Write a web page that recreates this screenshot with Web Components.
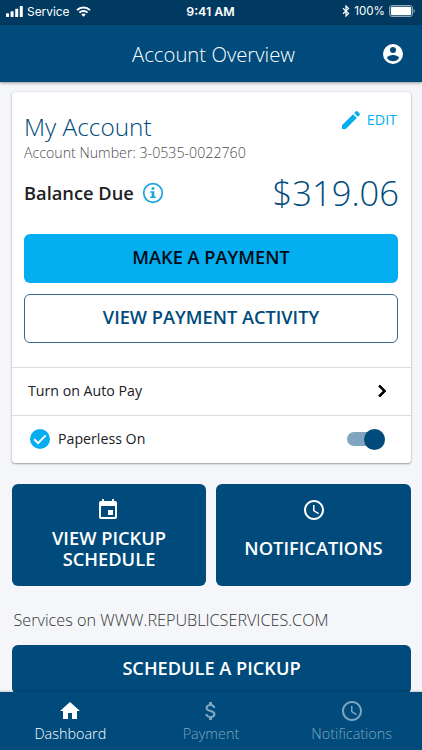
<!DOCTYPE html>
<html lang="en">
<head>
<meta charset="utf-8">
<meta name="viewport" content="width=device-width, initial-scale=1">
<title>Account Overview</title>
<style>
  html, body {
    margin: 0;
    height: 100%;
    overflow: hidden;
  }
  body {
    --navy: #004b7c;
    --sky: #05adf1;
    --ink: #202124;
    background: #f5f6f9;
    color: var(--ink);
    font-family: "Open Sans", "Noto Sans", sans-serif;
  }
</style>
</head>
<body>
<account-app></account-app>

<script>
const icons = {
  account: '<path fill-rule="evenodd" d="M12 2a10 10 0 1 0 0 20 10 10 0 0 0 0-20zm0 3a3 3 0 1 1 0 6 3 3 0 0 1 0-6zm0 14.2a7.2 7.2 0 0 1-6-3.22c.03-1.99 4-3.08 6-3.08s5.97 1.09 6 3.08a7.2 7.2 0 0 1-6 3.22z"/>',
  pencil: '<path d="M3 17.25V21h3.75L17.81 9.94l-3.75-3.75zM20.71 7.04a1 1 0 0 0 0-1.41l-2.34-2.34a1 1 0 0 0-1.41 0l-1.83 1.83 3.75 3.75z"/>',
  info: '<circle cx="12" cy="12" r="9.3" fill="none" stroke="currentColor" stroke-width="1.7"/><path d="M10.6 6.3h2.7v2.4h-2.7zM9.3 10.2h4v5.2h1.5V17H9.2v-1.6h1.5v-3.6H9.3z"/>',
  chevron: '<path d="M8.6 16.6l4.6-4.6-4.6-4.6L10 6l6 6-6 6z" stroke="currentColor" stroke-width=".8"/>',
  check: '<circle cx="12" cy="12" r="10"/><path d="M6.2 12.3l3.9 3.9 7.6-7.8" fill="none" stroke="#fff" stroke-width="2"/>',
  event: '<path d="M17 12h-5v5h5zM16 1v2H8V1H6v2H5a2 2 0 0 0-1.99 2L3 19a2 2 0 0 0 2 2h14a2 2 0 0 0 2-2V5a2 2 0 0 0-2-2h-1V1zm3 18H5V8h14z"/>',
  clock: '<path d="M11.99 2C6.47 2 2 6.48 2 12s4.47 10 9.99 10C17.52 22 22 17.52 22 12S17.52 2 11.99 2zM12 20a8 8 0 1 1 0-16 8 8 0 0 1 0 16zm.5-13H11v6l5.25 3.15.75-1.23-4.5-2.67z"/>',
  home: '<path d="M10 20v-6h4v6h5v-8h3L12 3 2 12h3v8z"/>',
  dollar: '<path d="M11.8 10.9c-2.27-.59-3-1.2-3-2.15 0-1.09 1.01-1.85 2.7-1.85 1.78 0 2.44.85 2.5 2.1h2.21c-.07-1.72-1.12-3.3-3.21-3.81V3h-3v2.16c-1.94.42-3.5 1.68-3.5 3.61 0 2.31 1.91 3.46 4.7 4.13 2.5.6 3 1.48 3 2.41 0 .69-.49 1.79-2.7 1.79-2.06 0-2.87-.92-2.98-2.1h-2.2c.12 2.19 1.76 3.42 3.68 3.83V21h3v-2.15c1.95-.37 3.5-1.5 3.5-3.55 0-2.84-2.43-3.81-4.7-4.4z"/>',
};

class UiIcon extends HTMLElement {
  connectedCallback() {
    const root = this.attachShadow({ mode: "open" });
    root.innerHTML = `
      <style>
        :host { display: block; flex: none; width: 24px; height: 24px; }
        svg { display: block; width: 100%; height: 100%; fill: currentColor; }
      </style>
      <svg viewBox="0 0 24 24" aria-hidden="true">${icons[this.getAttribute("name")]}</svg>`;
  }
}

// Shadow root filled from the class's static markup
class UiElement extends HTMLElement {
  constructor() {
    super();
    this.attachShadow({ mode: "open" }).innerHTML = this.constructor.markup;
  }
}

class StatusBar extends UiElement {
  static markup = `
    <style>
      :host {
        display: grid;
        grid-template-columns: 1fr auto 1fr;
        align-items: center;
        box-sizing: border-box;
        height: 25px;
        padding: 0 7px 0 6px;
        background: #003a61;
        color: #fff;
        font: 400 12px/15px Inter, sans-serif;
      }
      div { display: flex; align-items: center; padding-bottom: 3px; }
      .time { font-weight: 600; font-size: 12.4px; padding-bottom: 2px; }
      .carrier { font-size: 11.9px; margin: 0 6px 0 4px; }
      .right { justify-content: flex-end; }
      .right span { font-size: 11.6px; margin: 0 4px; }
      svg { display: block; }
    </style>
    <div>
      <svg width="17" height="11" fill="#fff">
        <rect x="0" y="7.2" width="3" height="3.8" rx=".6"/>
        <rect x="4.6" y="5.2" width="3" height="5.8" rx=".6"/>
        <rect x="9.2" y="2.8" width="3" height="8.2" rx=".6"/>
        <rect x="13.8" y="0" width="3" height="11" rx=".6"/>
      </svg>
      <span class="carrier">Service</span>
      <svg width="15" height="11" viewBox="0 0 15 11" fill="none" stroke="#fff" stroke-width="2">
        <path d="M1 4.1a9.2 9.2 0 0 1 13 0M3.4 6.6a5.8 5.8 0 0 1 8.2 0"/>
        <path d="M7.5 10.8L5.3 8.5a3.1 3.1 0 0 1 4.4 0z" fill="#fff" stroke="none"/>
      </svg>
    </div>
    <div class="time">9:41 AM</div>
    <div class="right">
      <svg width="8" height="12" viewBox="0 0 8 12" fill="none" stroke="#fff" stroke-width="1.2">
        <path d="M1 3.3l5.6 5.2L4 11V1l2.6 2.5L1 8.7"/>
      </svg>
      <span>100%</span>
      <svg width="26" height="12" viewBox="0 0 26 12">
        <rect x=".5" y=".5" width="23" height="11" rx="2.5" fill="none" stroke="#91a9bc"/>
        <rect x="1.8" y="1.8" width="20.4" height="8.4" rx="1.2" fill="#fff"/>
        <path d="M24.6 4v4q1.3-.6 1.3-2t-1.3-2z" fill="#91a9bc"/>
      </svg>
    </div>`;
}

class AppHeader extends UiElement {
  static markup = `
    <style>
      :host {
        display: grid;
        grid-template-columns: 1fr auto 1fr;
        align-items: center;
        box-sizing: border-box;
        height: 57px;
        padding: 0 17px;
        background: var(--navy);
        color: #fff;
        box-shadow: 0 1px 3px rgba(0, 0, 0, .4);
      }
      h1 {
        grid-column: 2;
        margin: 0 0 0 5px;
        font-size: 20.3px;
        font-weight: 300;
        line-height: 28px;
      }
      ui-icon { justify-self: end; }
    </style>
    <h1><slot></slot></h1>
    <ui-icon name="account"></ui-icon>`;
}

class UiButton extends UiElement {
  static markup = `
    <style>
      :host {
        display: flex;
        align-items: center;
        justify-content: center;
        box-sizing: border-box;
        height: 49px;
        padding-bottom: 3px;
        border-radius: 6px;
        background: var(--navy);
        color: #fff;
        font-size: 18.2px;
        font-weight: 550;
        line-height: 24px;
      }
      :host([kind="primary"]) { background: var(--sky); color: #020c14; }
      :host([kind="outline"]) {
        background: #fff;
        border: 1px solid #37698f;
        color: var(--navy);
      }
    </style>
    <slot></slot>`;
}

class ActionTile extends UiElement {
  static markup = `
    <style>
      :host {
        display: flex;
        flex-direction: column;
        align-items: center;
        box-sizing: border-box;
        height: 102px;
        padding: 14px 0 11px;
        border-radius: 6px;
        background: var(--navy);
        color: #fff;
        font-size: 18.3px;
        font-weight: 550;
        line-height: 20.5px;
        text-align: center;
      }
      .label { flex: 1; display: flex; align-items: center; }
    </style>
    <slot name="icon"></slot>
    <div class="label"><span><slot></slot></span></div>`;
}

class SettingRow extends UiElement {
  static markup = `
    <style>
      :host {
        display: flex;
        align-items: center;
        box-sizing: border-box;
        height: 48px;
        padding: 0 16px 1px;
        border-top: 1px solid #dcdde0;
        font-size: 14.2px;
        line-height: 20px;
      }
      .label { flex: 1; }
    </style>
    <slot name="start"></slot>
    <div class="label"><slot></slot></div>
    <slot name="end"></slot>`;
}

class UiSwitch extends UiElement {
  static markup = `
    <style>
      :host {
        display: flex;
        justify-content: flex-end;
        align-items: center;
        width: 38px;
        height: 14px;
        border-radius: 7px;
        background: #80a5be;
      }
      i { width: 21px; height: 21px; border-radius: 50%; background: var(--navy); flex: none; }
    </style>
    <i></i>`;
}

class AccountCard extends UiElement {
  static markup = `
    <style>
      :host {
        display: block;
        height: 371px;
        border-radius: 3px;
        background: #fff;
        box-shadow: 0 1px 2px rgba(0, 0, 0, .35), 0 0 2px rgba(0, 0, 0, .15);
      }
      .summary {
        display: flex;
        flex-direction: column;
        box-sizing: border-box;
        height: 275px;
        padding: 16px 13px 0 12px;
      }
      .top, .balance, .edit, .due { display: flex; align-items: center; }
      .top, .balance { justify-content: space-between; }
      .top { height: 36px; }
      h2 { margin: 2px 0 0; color: var(--navy); font-size: 24.4px; font-weight: 300; line-height: 34px; }
      .edit { gap: 4px; color: var(--sky); font-size: 14.3px; line-height: 20px; margin: -13px 1px 0 0; }
      .edit span { padding-top: 1px; }
      .number { color: #4c4d50; font-size: 14.2px; font-weight: 300; line-height: 18px; }
      .balance { height: 61px; margin-bottom: 11px; }
      .due { gap: 7px; font-size: 18.3px; font-weight: 580; }
      .due ui-icon { color: #18a4de; }
      .amount { margin-right: -1px; color: var(--navy); font-size: 34.5px; font-weight: 300; line-height: 44px; }
      ui-button + ui-button { margin-top: 11px; }
      [slot="start"] { margin-right: 6px; color: var(--sky); }
      ui-icon[slot="end"] { margin-right: 1px; color: #000; }
      ui-switch { margin-right: 10px; }
    </style>
    <div class="summary">
      <div class="top">
        <h2>My Account</h2>
        <div class="edit"><ui-icon name="pencil"></ui-icon><span>EDIT</span></div>
      </div>
      <div class="number">Account Number: 3-0535-0022760</div>
      <div class="balance">
        <div class="due">Balance Due <ui-icon name="info"></ui-icon></div>
        <div class="amount">$319.06</div>
      </div>
      <ui-button kind="primary">MAKE A PAYMENT</ui-button>
      <ui-button kind="outline">VIEW PAYMENT ACTIVITY</ui-button>
    </div>
    <setting-row>Turn on Auto Pay<ui-icon slot="end" name="chevron"></ui-icon></setting-row>
    <setting-row>
      <ui-icon slot="start" name="check"></ui-icon>
      Paperless On
      <ui-switch slot="end"></ui-switch>
    </setting-row>`;
}

class TabItem extends UiElement {
  static markup = `
    <style>
      :host {
        display: flex;
        flex-direction: column;
        align-items: center;
        padding-top: 7px;
        color: #7fa5be;
        font-size: 14.4px;
        font-weight: 300;
        line-height: 22px;
      }
      :host([active]) { color: #fff; }
    </style>
    <slot name="icon"></slot>
    <slot></slot>`;
}

class TabBar extends UiElement {
  static markup = `
    <style>
      :host {
        display: grid;
        grid-template-columns: repeat(3, 1fr);
        height: 58px;
        background: var(--navy);
        box-shadow: 0 -1px 2px rgba(0, 0, 0, .18);
      }
    </style>
    <slot></slot>`;
}

class AccountApp extends UiElement {
  static markup = `
    <style>
      :host { display: flex; flex-direction: column; height: 100vh; }
      status-bar, app-header, tab-bar { flex: none; }
      app-header, tab-bar { z-index: 1; }
      main { flex: 1; min-height: 0; overflow: hidden; padding: 10px 11px 0 12px; }
      .tiles { display: grid; grid-template-columns: 194px 1fr; gap: 10px; margin-top: 21px; }
      [name="event"] { margin-right: 3px; }
      p { margin: 22px 0 12px 1.5px; color: #333; font-size: 16.2px; font-weight: 300; line-height: 25px; }
    </style>
    <status-bar></status-bar>
    <app-header>Account Overview</app-header>
    <main>
      <account-card></account-card>
      <div class="tiles">
        <action-tile><ui-icon slot="icon" name="event"></ui-icon>VIEW PICKUP<br>SCHEDULE</action-tile>
        <action-tile><ui-icon slot="icon" name="clock"></ui-icon>NOTIFICATIONS</action-tile>
      </div>
      <p>Services on WWW.REPUBLICSERVICES.COM</p>
      <ui-button>SCHEDULE A PICKUP</ui-button>
    </main>
    <tab-bar>
      <tab-item active><ui-icon slot="icon" name="home"></ui-icon>Dashboard</tab-item>
      <tab-item><ui-icon slot="icon" name="dollar"></ui-icon>Payment</tab-item>
      <tab-item><ui-icon slot="icon" name="clock"></ui-icon>Notifications</tab-item>
    </tab-bar>`;
}

customElements.define("ui-icon", UiIcon);
customElements.define("status-bar", StatusBar);
customElements.define("app-header", AppHeader);
customElements.define("ui-button", UiButton);
customElements.define("action-tile", ActionTile);
customElements.define("setting-row", SettingRow);
customElements.define("ui-switch", UiSwitch);
customElements.define("account-card", AccountCard);
customElements.define("tab-item", TabItem);
customElements.define("tab-bar", TabBar);
customElements.define("account-app", AccountApp);
</script>
</body>
</html>
